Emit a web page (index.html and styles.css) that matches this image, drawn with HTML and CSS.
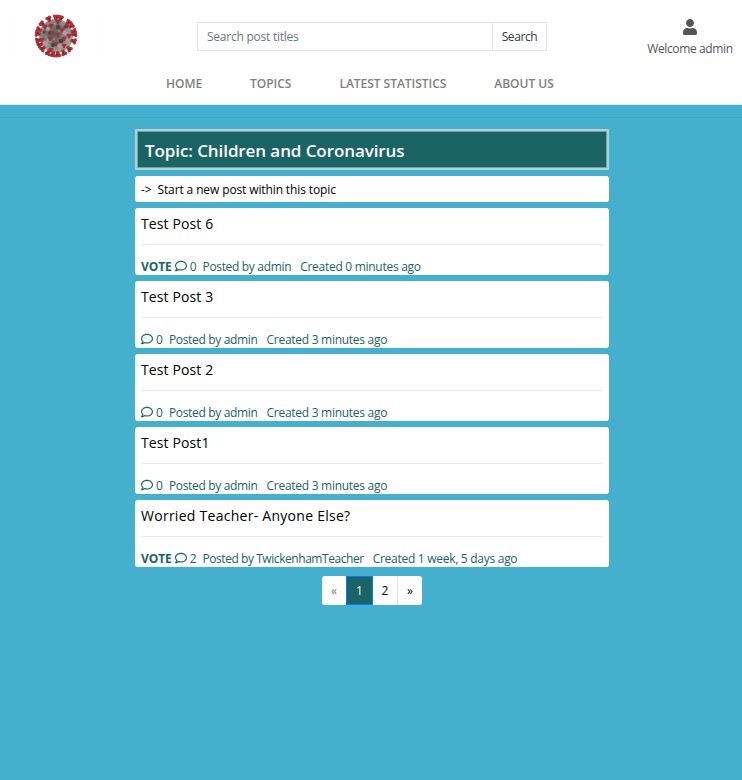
FILE: index.html
```html
<!DOCTYPE html>
<html lang="en">
<head>
<meta charset="utf-8">
<title>Children and Coronavirus</title>
<link rel="stylesheet" href="styles.css">
</head>
<body>
<svg class="defs" width="0" height="0" aria-hidden="true">
  <defs>
    <radialGradient id="shell" cx="45%" cy="45%"><stop offset="0" stop-color="#5c5c5c"/><stop offset=".6" stop-color="#777"/><stop offset="1" stop-color="#a29c9c"/></radialGradient>
    <g id="spike"><path d="M-1.200 -15h2.400v-3h-2.400z" fill="#a08a80"/><path d="M-3.200 -20.400q1.400-1.700 3.200-.6 1.700-1.200 3.200.6.200 1.900-1.300 2.500l-.6 2.700h-2.600l-.7-2.700q-1.300-.8-1.200-2.500z" fill="#ad3438"/><path d="M-.3 -19.800l2.200 1-1.500 2.600z" fill="#7c2226"/></g>
    <path id="knob" d="M-2.400 -1.500q1.200-1.400 2.400-.3 1.300-1.100 2.500.3 0 1.300-1.100 1.800l-.6 2h-1.600l-.6-2q-1.100-.6-1-1.800z" fill="#a82f34"/>
    <symbol id="comment" viewBox="0 0 512 512"><path fill="currentColor" d="M256 32C114.600 32 0 125.100 0 240c0 47.600 19.900 91.200 52.900 126.300C38 405.700 7 439.100 6.500 439.500c-6.600 7-8.400 17.200-4.600 26S14.400 480 24 480c61.500 0 110-25.700 139.100-46.300C192 442.800 223.200 448 256 448c141.400 0 256-93.100 256-208S397.400 32 256 32zm0 368c-26.700 0-53.100-4.100-78.400-12.100l-22.700-7.200-19.500 13.800c-14.300 10.100-33.900 21.400-57.500 29 7.300-12.100 14.400-25.700 19.900-40.200l10.600-28.100-20.600-21.800C69.700 314.100 48 282.200 48 240c0-88.200 93.300-160 208-160s208 71.800 208 160-93.300 160-208 160z"/></symbol>
  </defs>
</svg>
<header class="top">
  <a class="brand" href="#">
    <svg class="virus" viewBox="-24 -24 48 48" aria-label="Coronavirus">
      <circle r="17" fill="url(#shell)"/>
      <g fill="#a4a0a0"><circle cx="-11" cy="8" r="3"/><circle cx="-7" cy="4" r="2.500"/><circle cx="9" cy="-3" r="2.500"/><circle cx="4" cy="10" r="2.500"/><circle cx="-8" cy="-7" r="2"/><circle cx="12" cy="4" r="2"/></g>
      <g fill="#444"><circle cx="2" cy="-9" r="2.300"/><circle cx="-6" cy="-3" r="2"/><circle cx="5" cy="5" r="2.300"/><circle cx="-3" cy="9" r="2"/><circle cx="9" cy="-9" r="1.600"/><circle cx="-12" cy="-4" r="1.500"/></g>
      <g><use href="#spike"/><use href="#spike" transform="rotate(14)"/><use href="#spike" transform="rotate(42)"/><use href="#spike" transform="rotate(56)"/><use href="#spike" transform="rotate(75)"/><use href="#spike" transform="rotate(84)"/><use href="#spike" transform="rotate(106)"/><use href="#spike" transform="rotate(134)"/><use href="#spike" transform="rotate(155)"/><use href="#spike" transform="rotate(174)"/><use href="#spike" transform="rotate(189)"/><use href="#spike" transform="rotate(205)"/><use href="#spike" transform="rotate(226)"/><use href="#spike" transform="rotate(241)"/><use href="#spike" transform="rotate(256)"/><use href="#spike" transform="rotate(277)"/><use href="#spike" transform="rotate(290)"/><use href="#spike" transform="rotate(311)"/><use href="#spike" transform="rotate(337)"/></g>
      <g><use href="#knob" x="-5" y="-10"/><use href="#knob" x="2" y="-14"/><use href="#knob" x="11" y="-10"/><use href="#knob" x="-11" y="-9"/><use href="#knob" x="-4" y="-3"/><use href="#knob" x="2" y="-1"/><use href="#knob" x="6" y="-6"/><use href="#knob" x="-6" y="3"/><use href="#knob" x="8" y="3"/><use href="#knob" x="0" y="8"/><use href="#knob" x="-14" y="4"/><use href="#knob" x="8" y="10"/><use href="#knob" x="13" y="0"/><use href="#knob" x="-5" y="14"/></g>
      <g fill="#e0a060"><circle cx="-8" cy="-8" r=".8"/><circle cx="3" cy="-5" r=".8"/><circle cx="-10" cy="1" r=".8"/><circle cx="6" cy="0" r=".8"/><circle cx="-2" cy="3" r=".8"/><circle cx="10" cy="6" r=".8"/><circle cx="-7" cy="9" r=".8"/><circle cx="4" cy="12" r=".8"/><circle cx="-1" cy="-12" r=".8"/><circle cx="11" cy="-4" r=".8"/></g>
    </svg>
  </a>
  <div class="middle">
    <form class="search">
      <input type="text" placeholder="Search post titles">
      <button type="button">Search</button>
    </form>
    <nav class="nav"><a>HOME</a><a>TOPICS</a><a>LATEST STATISTICS</a><a>ABOUT US</a></nav>
  </div>
  <div class="user">
    <svg class="user-icon" viewBox="0 0 448 512"><path fill="currentColor" d="M224 256c70.700 0 128-57.300 128-128S294.700 0 224 0 96 57.300 96 128s57.300 128 128 128zm89.600 32h-16.700c-22.200 10.200-46.900 16-72.900 16s-50.600-5.800-72.900-16h-16.700C60.200 288 0 348.200 0 422.400V464c0 26.500 21.500 48 48 48h352c26.500 0 48-21.500 48-48v-41.600c0-74.200-60.200-134.400-134.400-134.400z"/></svg>
    <span>Welcome admin</span>
  </div>
</header>
<hr class="divider">
<main class="board">
  <h1 class="topic"><span>Topic: Children and Coronavirus</span></h1>
  <a class="new-post"><span class="arrow">-&gt; </span><span>Start a new post within this topic</span></a>
  <article class="post"><h2><span>Test Post 6</span></h2><p><b>VOTE</b><svg><use href="#comment"/></svg><span class="count">0</span><span class="author">Posted by admin</span><span class="age">Created 0 minutes ago</span></p></article>
  <article class="post"><h2><span>Test Post 3</span></h2><p><svg><use href="#comment"/></svg><span class="count">0</span><span class="author">Posted by admin</span><span class="age">Created 3 minutes ago</span></p></article>
  <article class="post"><h2><span>Test Post 2</span></h2><p><svg><use href="#comment"/></svg><span class="count">0</span><span class="author">Posted by admin</span><span class="age">Created 3 minutes ago</span></p></article>
  <article class="post"><h2><span>Test Post1</span></h2><p><svg><use href="#comment"/></svg><span class="count">0</span><span class="author">Posted by admin</span><span class="age">Created 3 minutes ago</span></p></article>
  <article class="post"><h2><span class="wide">Worried Teacher- Anyone Else?</span></h2><p><b>VOTE</b><svg><use href="#comment"/></svg><span class="count">2</span><span class="author long">Posted by TwickenhamTeacher</span><span class="age">Created 1 week, 5 days ago</span></p></article>
  <nav class="pages"><a class="off">«</a><a class="current">1</a><a>2</a><a>»</a></nav>
</main>
</body>
</html>
```
FILE: styles.css
```css
* { box-sizing: border-box; }
body { margin: 0; min-height: 780px; background: #44b0ce; font-family: "Open Sans", "Noto Sans", sans-serif; font-size: 12px; color: #1a6466; }
.defs { display: block; height: 0; }
.top { display: grid; grid-template-columns: 135px 474px 133px; height: 105px; background: #fff; border-bottom: 1px solid #d5edf4; }
.brand { width: 89px; height: 49px; margin: 12px 0 0 12px; border: 1px solid #fdfdfd; }
.virus { display: block; width: 48px; height: 48px; margin: -1px 0 0 19px; }
.middle { display: flex; flex-direction: column; }
.search { display: flex; width: 350px; height: 29px; margin: 22px 0 0 62px; }
.search input { width: 296px; border: 1px solid #dfe3e7; padding: 0 9px; font: 12px "Open Sans", sans-serif; letter-spacing: -.24px; }
.search input::placeholder { color: #6c757d; opacity: 1; }
.search button { width: 55px; margin-left: -1px; padding: 0; border: 1px solid #dfe3e7; background: #fff; font: 12px "Open Sans", sans-serif; letter-spacing: -.4px; color: #343a40; }
.nav { display: flex; gap: 48px; margin: 23px 0 0 31px; font-weight: 600; line-height: 20px; color: #808080; white-space: nowrap; letter-spacing: -.03px; }
.user { display: flex; flex-direction: column; align-items: center; padding: 19px 0 0 29px; color: #555; line-height: 18px; letter-spacing: -.37px; white-space: nowrap; }
.user-icon { width: 14px; height: 16px; margin-bottom: 5px; }
.divider { height: 1px; margin: 12px 0; border: 0; background: #3fa6c3; }
.board { width: 474px; margin: 0 0 0 135px; display: flex; flex-direction: column; }
.topic { height: 41px; margin: -1px 0 6px; padding: 0 8px; border: 2px solid #b3d0d4; box-shadow: inset 0 0 0 1px #77a0a1; background: #1a6466; color: #fff; font-size: 17px; font-weight: 600; line-height: 39px; letter-spacing: -.09px; }
.new-post { height: 26px; margin-bottom: 6px; padding: 0 6px; border-radius: 3px; background: #fff; color: #000; font-size: 12px; font-weight: 500; line-height: 27px; letter-spacing: -.12px; }
.new-post .arrow { margin-right: 3px; }
.post { height: 67px; margin-bottom: 6px; padding: 0 6px; border-radius: 3px; background: #fff; }
.post h2 { height: 37px; margin: 0; border-bottom: 1px solid #ebebeb; color: #000; font-size: 14px; font-weight: 500; line-height: 31px; letter-spacing: .12px; }
.post h2 .wide { letter-spacing: .27px; }
.post p { display: flex; align-items: center; height: 18px; margin: 12px 0 0; white-space: nowrap; }
.post b { margin-right: 3px; font-weight: 700; letter-spacing: -.1px; }
.post svg { width: 12px; height: 12px; margin-right: 3px; }
.count { margin-right: 6px; }
.author { margin-right: 9px; letter-spacing: -.33px; }
.author.long { letter-spacing: -.44px; }
.age { letter-spacing: -.28px; }
.pages { display: flex; width: 100px; height: 29px; margin: 3px auto 0; border-radius: 3px; background: #fff; color: #000; line-height: 29px; text-align: center; }
.pages a { flex: 1; border-right: 1px solid #dee2e6; }
.pages a:last-child { border: 0; }
.pages .off { color: #6c757d; border: 0; }
.pages .current { flex: 0 0 27px; border: 1px solid #007bff; background: #1a6466; color: #fff; line-height: 27px; }
```
